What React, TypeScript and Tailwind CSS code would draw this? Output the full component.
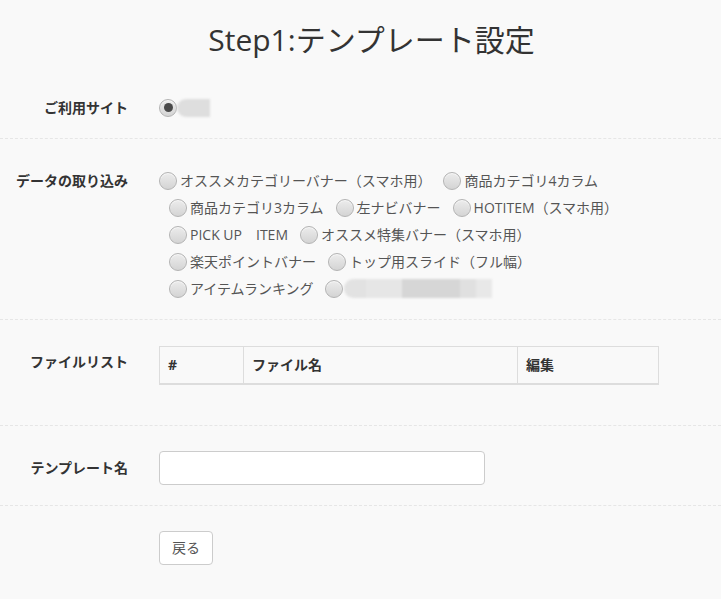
// Step1 template settings screen
import React from "react";

type Opt = { label?: string; blur?: boolean };

const lines: Opt[][] = [
  [{ label: "オススメカテゴリーバナー（スマホ用）" }, { label: "商品カテゴリ4カラム" }],
  [{ label: "商品カテゴリ3カラム" }, { label: "左ナビバナー" }, { label: "HOTITEM（スマホ用）" }],
  [{ label: "PICK UP　ITEM" }, { label: "オススメ特集バナー（スマホ用）" }],
  [{ label: "楽天ポイントバナー" }, { label: "トップ用スライド（フル幅）" }],
  [{ label: "アイテムランキング" }, { blur: true }],
];

function Radio({ checked = false }: { checked?: boolean }) {
  return (
    <span className="relative inline-flex h-[18px] w-[18px] shrink-0 items-center justify-center rounded-full border border-[#b3b3b3] bg-gradient-to-b from-[#ececec] to-[#d4d4d4] shadow-[inset_0_1px_1px_rgba(255,255,255,0.7)]">
      {checked && <span className="h-[9px] w-[9px] rounded-full bg-[#4a4a4a]" />}
    </span>
  );
}

function Row({ label, children, className, labelClass }: { label?: string; children: React.ReactNode; className: string; labelClass?: string }) {
  return (
    <div className={`grid grid-cols-[159px_1fr] border-b border-dashed border-[#e6e6e6] ${className}`}>
      <div className={`pr-[31px] text-right text-[14px] font-bold text-[#333] ${labelClass ?? ""}`}>{label}</div>
      <div>{children}</div>
    </div>
  );
}

export default function App() {
  return (
    <div className="min-h-[599px] w-full bg-[#f9f9f9] text-[#333] [font-family:'Open_Sans','Noto_Sans_CJK_JP',sans-serif]">
      <h1 className="pt-[20px] pl-[22px] text-center text-[30px] font-normal leading-[40px] text-[#333]">Step1:テンプレート設定</h1>

      {/* ご利用サイト */}
      <Row label="ご利用サイト" className="pt-[34px] pb-[17px]" labelClass="leading-[27px]">
        <div className="flex h-[27px] items-center">
          <Radio checked />
          <span className="h-[18px] w-[33px] rounded-l-full bg-[#dedede] blur-[1px]" />
        </div>
      </Row>

      {/* データの取り込み */}
      <Row label="データの取り込み" className="pt-[28px] pb-[17px]" labelClass="leading-[27px]">
        <div className="flex flex-col">
          {lines.map((line, li) => (
            <div key={li} className={`flex h-[27px] items-center ${li > 0 ? "ml-[10px]" : ""}`}>
              {line.map((o, oi) => (
                <div key={oi} className={`flex items-center ${oi > 0 ? "ml-[12px]" : ""}`}>
                  <Radio />
                  {o.blur ? (
                    <span className="ml-[1px] flex h-[19px] items-center blur-[1px]">
                      <span className="h-[19px] w-[22px] rounded-l-full bg-[#e2e2e2]" />
                      <span className="h-[19px] w-[36px] bg-[#e6e6e6]" />
                      <span className="h-[19px] w-[58px] bg-[#d6d6d6]" />
                      <span className="h-[19px] w-[16px] bg-[#e0e0e0]" />
                      <span className="h-[19px] w-[16px] bg-[#e8e8e8]" />
                    </span>
                  ) : (
                    <span className="ml-[3px] whitespace-pre text-[14px] leading-[20px] text-[#555]">{o.label}</span>
                  )}
                </div>
              ))}
            </div>
          ))}
        </div>
      </Row>

      {/* ファイルリスト */}
      <Row label="ファイルリスト" className="pt-[26px] pb-[40px]" labelClass="pt-[6px] leading-[20px]">
        <table className="w-[500px] border-collapse text-[14px] font-bold text-[#333]">
          <thead>
            <tr className="h-[37px]">
              <th className="w-[84px] border border-b-2 border-[#ddd] px-[8px] text-left">#</th>
              <th className="w-[274px] border border-b-2 border-[#ddd] px-[8px] text-left">ファイル名</th>
              <th className="border border-b-2 border-[#ddd] px-[8px] text-left">編集</th>
            </tr>
          </thead>
        </table>
      </Row>

      {/* テンプレート名 */}
      <Row label="テンプレート名" className="pt-[25px] pb-[20px]" labelClass="leading-[34px]">
        <input type="text" className="block h-[34px] w-[326px] rounded-[4px] border border-[#ccc] bg-white px-[12px] text-[14px] outline-none" />
      </Row>

      {/* 戻る */}
      <div className="grid grid-cols-[159px_1fr] pt-[25px] pb-[34px]">
        <div />
        <div>
          <button className="h-[34px] w-[54px] rounded-[4px] border border-[#ccc] bg-white text-[14px] text-[#555]">戻る</button>
        </div>
      </div>
    </div>
  );
}
